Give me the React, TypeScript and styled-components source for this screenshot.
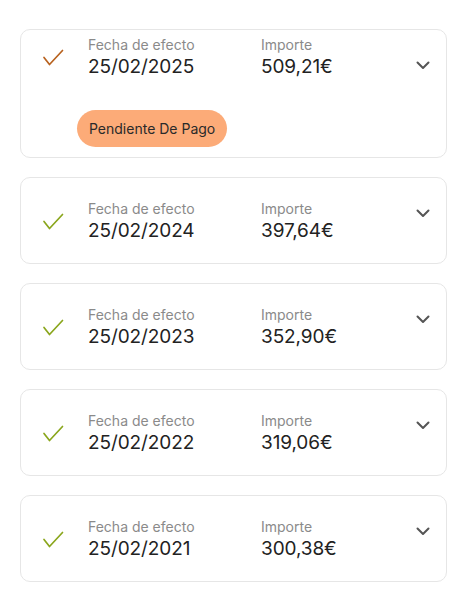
import React from 'react'
import styled, { createGlobalStyle } from 'styled-components'

type Payment = {
    date: string
    amount: string
    pending?: boolean
}

const payments: Payment[] = [
    { date: '25/02/2025', amount: '509,21€', pending: true },
    { date: '25/02/2024', amount: '397,64€' },
    { date: '25/02/2023', amount: '352,90€' },
    { date: '25/02/2022', amount: '319,06€' },
    { date: '25/02/2021', amount: '300,38€' },
]

const CheckIcon = ({ color }: { color: string }) => (
    <svg width="22" height="18" viewBox="0 0 22 18" fill="none">
        <path d="M2 8.5 L7.5 15.5 L20.5 1.5" stroke={color} strokeWidth="1.7" strokeLinecap="round" strokeLinejoin="round" />
    </svg>
)

const ChevronIcon = () => (
    <svg width="14" height="9" viewBox="0 0 14 9" fill="none">
        <path d="M1.5 1.5 L7 7 L12.5 1.5" stroke="#555" strokeWidth="2" strokeLinecap="round" strokeLinejoin="round" />
    </svg>
)

const App = () => {
    return (
        <>
            <GlobalStyle />
            <List>
                {payments.map((p) => (
                    <Card key={p.date} expanded={!!p.pending}>
                        <Row>
                            <IconBox>
                                <CheckIcon color={p.pending ? '#b8621f' : '#8aa61c'} />
                            </IconBox>
                            <Field width="173px">
                                <Label>Fecha de efecto</Label>
                                <Value>{p.date}</Value>
                            </Field>
                            <Field>
                                <Label>Importe</Label>
                                <Value>{p.amount}</Value>
                            </Field>
                            <ChevronBox offset={p.pending ? 8 : -8}>
                                <ChevronIcon />
                            </ChevronBox>
                        </Row>
                        {p.pending && (
                            <Footer>
                                <Pill>Pendiente De Pago</Pill>
                            </Footer>
                        )}
                    </Card>
                ))}
            </List>
        </>
    )
}

const GlobalStyle = createGlobalStyle`
    body {
        margin: 0;
        background: #fff;
        font-family: "Inter", "Noto Sans", sans-serif;
    }
`

const List = styled.div`
    display: flex;
    flex-direction: column;
    gap: 19px;
    padding: 29px 19px 20px 20px;
`

const Card = styled.div<{ expanded: boolean }>`
    display: flex;
    flex-direction: column;
    border: 1px solid #e6e6e6;
    border-radius: 10px;
    background: #fff;
    padding: ${({ expanded }) => (expanded ? '5px 0 10px' : '21px 0 19px')};
`

const Row = styled.div`
    display: flex;
    align-items: center;
`

const IconBox = styled.div`
    display: flex;
    align-items: center;
    justify-content: center;
    width: 22px;
    margin: 0 24px 0 21px;
`

const Field = styled.div<{ width?: string }>`
    display: flex;
    flex-direction: column;
    width: ${({ width }) => width || 'auto'};
    flex: ${({ width }) => (width ? 'none' : '1')};
`

const Label = styled.span`
    font-size: 14px;
    line-height: 19px;
    color: #8a8a8a;
`

const Value = styled.span`
    font-size: 19px;
    line-height: 26px;
    color: #222;
    letter-spacing: -0.1px;
`

const ChevronBox = styled.div<{ offset: number }>`
    display: flex;
    margin: 0 16px 0 0;
    transform: translateY(${({ offset }) => offset}px);
`

const Footer = styled.div`
    display: flex;
    padding: 30px 0 0 56px;
`

const Pill = styled.div`
    display: flex;
    align-items: center;
    height: 37px;
    padding: 0 12px;
    border-radius: 19px;
    background: #fcab78;
    color: #2a2a2a;
    font-size: 14px;
`

export default App
